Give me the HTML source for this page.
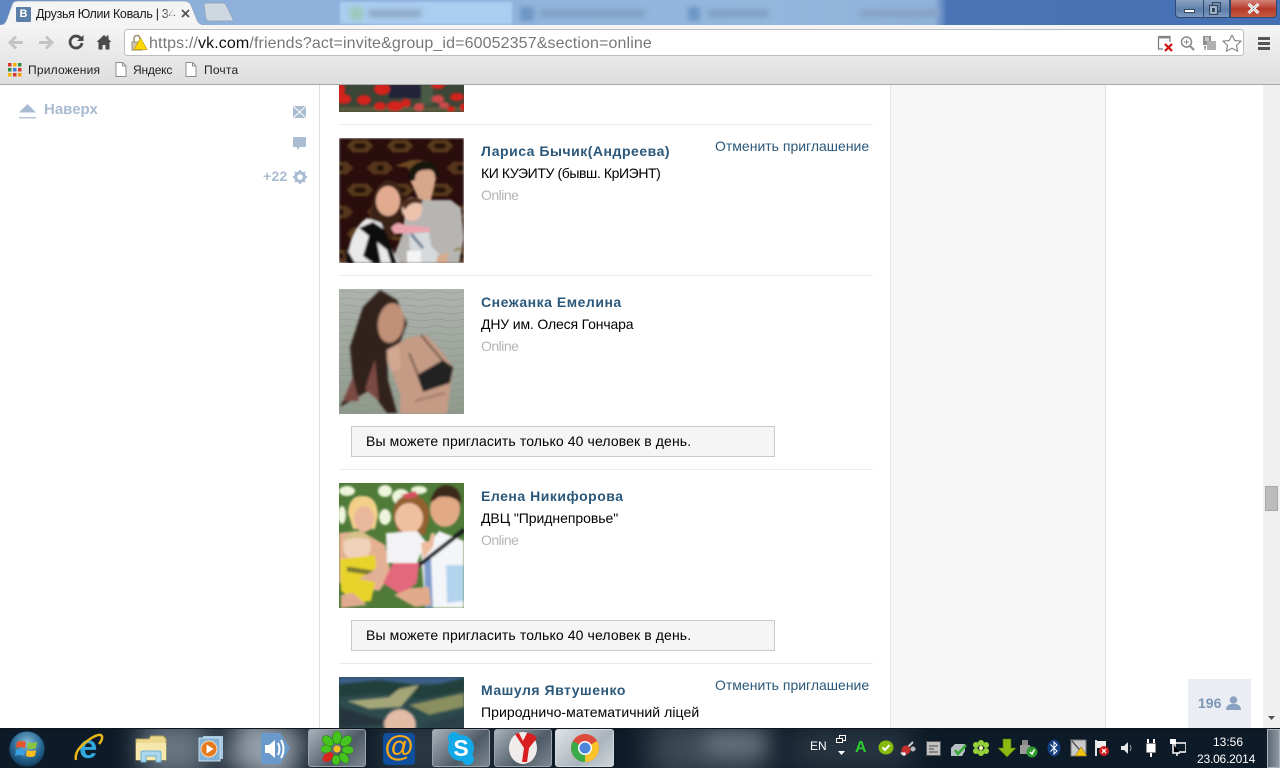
<!DOCTYPE html>
<html lang="ru"><head><meta charset="utf-8"><title>Друзья Юлии Коваль</title>
<style>
*{margin:0;padding:0;box-sizing:border-box}
html,body{width:1280px;height:768px;overflow:hidden;background:#fff;font-family:"Liberation Sans","DejaVu Sans",sans-serif}
.a{position:absolute}
.t{position:absolute;white-space:nowrap}
.name{font-weight:700;font-size:14px;color:#2b587a;left:481px;letter-spacing:.52px}
.sub{font-size:14px;color:#000;left:481px}
.on{font-size:14px;color:#b5b5b5;left:481px;letter-spacing:-.5px}
.sep{position:absolute;left:339px;width:534px;height:1px;background:#e9ebee}
.cancel{font-size:14px;color:#2b587a;left:715px}
.box{position:absolute;left:351px;width:424px;height:31px;border:1px solid #c9c9c9;background:#f5f5f5;font-size:14px;letter-spacing:.11px;color:#000;padding:6px 0 0 14px;white-space:nowrap}
svg{position:absolute;display:block}
.tbtn{position:absolute;top:729px;height:38px;border:1px solid #9aa3ac;border-radius:3px;background:linear-gradient(135deg,#a9b2bb,#4f5b66 60%,#7b8690)}
</style></head><body>

<!-- page columns -->
<div class="a" style="left:319px;top:85px;width:1px;height:643px;background:#dae1e8"></div>
<div class="a" style="left:890px;top:85px;width:216px;height:643px;background:#f7f7f7;border-left:1px solid #e7e8ec;border-right:1px solid #dae1e8"></div>
<div class="a" style="left:1263px;top:85px;width:17px;height:643px;background:#f0f0f0"></div>
<div class="a" style="left:1265px;top:486px;width:13px;height:25px;background:#bcbcbc;border:1px solid #a8a8a8"></div>
<svg style="left:1268px;top:716px" width="8" height="5"><path d="M0 0H7L3.500 4Z" fill="#505050"/></svg>

<!-- left rail -->
<svg style="left:19px;top:104px" width="18" height="16"><path d="M8.500 0L17 8.500H0Z" fill="#a9bbd0"/><rect y="13" width="17" height="1.500" fill="#b4c3d5"/></svg>
<div class="t" style="left:44px;top:101px;font-size:15px;font-weight:700;color:#a9bbd0">Наверх</div>
<svg style="left:293px;top:106px" width="13" height="12"><rect width="13" height="12" fill="#a9bcd2"/><path d="M0 0L13 12M13 0L0 12" stroke="#fff" stroke-width="1"/></svg>
<svg style="left:293px;top:137px" width="13" height="14"><path d="M1 0H12Q13 0 13 1V9Q13 10 12 10H7L4 13V10H1Q0 10 0 9V1Q0 0 1 0Z" fill="#a9bcd2"/></svg>
<div class="t" style="left:263px;top:168px;font-size:14px;font-weight:700;color:#a9bbd0;letter-spacing:.3px">+22</div>
<svg style="left:293px;top:170px" width="14" height="14"><circle cx="7" cy="7" r="4.300" fill="none" stroke="#a9bcd2" stroke-width="3"/><path d="M7 0V14M0 7H14M2 2L12 12M12 2L2 12" stroke="#a9bcd2" stroke-width="2" stroke-dasharray="2.300 9.400 2.300"/></svg>

<!-- photo 1 poppies -->
<svg style="left:339px;top:85px" width="125" height="27"><defs><filter id="b1"><feGaussianBlur stdDeviation="1.100"/></filter></defs><rect width="125" height="27" fill="#3c4636"/><g filter="url(#b1)"><rect x="50" width="32" height="13" fill="#24243a"/><rect x="82" width="12" height="20" fill="#4a5a45"/><rect y="22" width="125" height="5" fill="#5a5a3e"/><g fill="#d4241a"><ellipse cx="2" cy="5" rx="4" ry="7"/><ellipse cx="5" cy="14" rx="7" ry="5"/><ellipse cx="25" cy="15" rx="7" ry="5"/><ellipse cx="43" cy="4" rx="8" ry="6"/><ellipse cx="41" cy="21" rx="6" ry="4"/><ellipse cx="56" cy="21" rx="8" ry="5"/><ellipse cx="67" cy="18" rx="5" ry="4"/><ellipse cx="99" cy="-1" rx="7" ry="5"/><ellipse cx="118" cy="12" rx="7" ry="4"/><ellipse cx="112" cy="24" rx="4" ry="3"/><ellipse cx="124" cy="22" rx="3" ry="4"/></g><g fill="#cf4a4a"><ellipse cx="80" cy="22" rx="5" ry="4"/><ellipse cx="99" cy="14" rx="6" ry="4"/><ellipse cx="105" cy="20" rx="5" ry="3"/></g></g></svg>

<!-- row 2 -->
<div class="sep" style="top:124px"></div>
<svg style="left:339px;top:138px" width="125" height="125"><defs><filter id="b2"><feGaussianBlur stdDeviation="1.100"/></filter><pattern id="rug" width="40" height="44" patternUnits="userSpaceOnUse"><rect width="40" height="44" fill="#2a100d"/><path d="M8 8L14 2H28L34 8L28 14H14Z" fill="#5a3a1c"/><path d="M14 8L17 5H25L28 8L25 11H17Z" fill="#27160f"/><path d="M-12 30L-6 24H8L14 30L8 36H-6Z M28 30L34 24H48L54 30L48 36H34Z" fill="#55341a"/><path d="M-3 30L0 27H3L5 30L3 33H0ZM37 30L40 27H43L45 30L43 33H40Z" fill="#1f100c"/></pattern></defs><rect width="125" height="125" fill="url(#rug)" filter="url(#b2)"/><g filter="url(#b2)"><path d="M56 28L72 22H84L74 30Z" fill="#6e4c24"/><path d="M52 125L64 95L66 72L84 62L112 62L122 70L125 100L120 125Z" fill="#b7b5b2"/><path d="M70 40Q72 24 86 24Q98 26 97 40L92 62L80 62Z" fill="#d7a78b"/><path d="M70 44Q68 24 86 23Q100 24 99 40L96 40Q96 30 86 32Q76 32 76 42Z" fill="#191210"/><path d="M31 85Q32 46 48 42Q64 42 65 66L60 92L50 102L44 90Z" fill="#3a2114"/><ellipse cx="49" cy="63" rx="12" ry="15" fill="#e2ab90"/><path d="M8 125Q10 92 28 80L42 85L50 105L60 125Z" fill="#e9e9e9"/><path d="M20 90L30 98L24 118L34 125H42L38 104L48 112L52 125H58L46 92L34 84ZM6 108L16 125H8Z" fill="#111"/><ellipse cx="73" cy="71" rx="10" ry="12" fill="#eec3ad"/><path d="M62 66Q70 55 84 62L82 66Q72 62 66 72Z" fill="#4d2e1e"/><path d="M52 90Q58 82 66 87L78 88L92 90L90 94L56 96Z" fill="#eba4ad"/><path d="M70 96L90 94L92 108L102 118L100 125H72Z" fill="#d6dadc"/><path d="M72 96L84 110" stroke="#6f7f9a" stroke-width="3"/><rect x="68" y="113" width="14" height="12" fill="#f4f4f4"/><path d="M98 118L110 114L108 125H98Z" fill="#d6ac90"/><path d="M115 112L124 110" stroke="#8a7b35" stroke-width="2"/></g></svg>
<div class="t name" style="top:143px">Лариса Бычик(Андреева)</div>
<div class="t cancel" style="top:138px">Отменить приглашение</div>
<div class="t sub" style="top:165px;letter-spacing:-.4px">КИ КУЭИТУ (бывш. КрИЭНТ)</div>
<div class="t on" style="top:187px">Online</div>

<!-- row 3 -->
<div class="sep" style="top:275px"></div>
<svg style="left:339px;top:289px" width="125" height="125"><defs><filter id="b3"><feGaussianBlur stdDeviation="1.300"/></filter><linearGradient id="w3" x1="0" y1="0" x2="0" y2="1"><stop offset="0" stop-color="#aeb3ae"/><stop offset="1" stop-color="#8f9a8c"/></linearGradient><pattern id="wv" width="30" height="7" patternUnits="userSpaceOnUse"><path d="M0 3Q8 1 15 3T30 3" fill="none" stroke="#7f8781" stroke-width="1" opacity=".35"/></pattern></defs><rect width="125" height="125" fill="url(#w3)"/><rect width="125" height="125" fill="url(#wv)"/><g filter="url(#b3)"><path d="M41 1L58 11L68 34L61 54L48 61L49 91L58 124L48 124L31 101L8 114L1 118L14 91L11 58L24 18Z" fill="#33201d"/><path d="M4 112L14 88L20 112ZM26 100L36 70L40 112Z" fill="#7a4a42"/><ellipse cx="52" cy="34" rx="13" ry="20" fill="#c09178" transform="rotate(8 52 34)"/><path d="M48 61L71 48L88 46L104 64L114 78L111 101L108 125H61L61 104L48 71Z" fill="#c59b85"/><path d="M48 61L60 56L62 80L52 82Z" fill="#d1a892"/><path d="M78 86L104 71L114 78L111 94L84 103Z" fill="#222022"/><path d="M82 46L104 72M70 64L80 88" stroke="#3a2a25" stroke-width="1.500"/><path d="M76 112L106 104" stroke="#a98470" stroke-width="3"/></g></svg>
<div class="t name" style="top:294px">Снежанка Емелина</div>
<div class="t sub" style="top:316px;letter-spacing:-.15px">ДНУ им. Олеся Гончара</div>
<div class="t on" style="top:338px">Online</div>
<div class="box" style="top:426px">Вы можете пригласить только 40 человек в день.</div>

<!-- row 4 -->
<div class="sep" style="top:469px"></div>
<svg style="left:339px;top:483px" width="125" height="125"><defs><filter id="b4"><feGaussianBlur stdDeviation="1.100"/></filter></defs><rect width="125" height="125" fill="#4f7a38"/><g filter="url(#b4)"><g fill="#eef5dc"><ellipse cx="8" cy="8" rx="8" ry="5"/><ellipse cx="46" cy="8" rx="7" ry="6"/><ellipse cx="62" cy="14" rx="9" ry="8"/><ellipse cx="80" cy="7" rx="8" ry="4"/><ellipse cx="46" cy="34" rx="6" ry="8"/><ellipse cx="3" cy="32" rx="4" ry="9"/></g><path d="M0 50L22 48L46 62L52 92L40 108L0 100Z" fill="#e6b092"/><path d="M9 30Q10 12 24 13Q38 13 39 32L36 46L14 46Z" fill="#f2d08a"/><ellipse cx="25" cy="36" rx="10" ry="13" fill="#eab89c"/><path d="M86 125L82 70L100 48L125 58V125Z" fill="#f4f5f8"/><path d="M85 76H92L94 125H86Z" fill="#7d9ccc"/><path d="M107 82H125V118L108 120Z" fill="#b4d4ee"/><path d="M79 83L125 47" stroke="#171a22" stroke-width="4"/><ellipse cx="106" cy="26" rx="15" ry="18" fill="#e2a985"/><path d="M91 20Q95 2 108 2Q123 4 122 22Q116 12 100 14Z" fill="#3a2a1c"/><path d="M54 34Q54 12 72 12Q92 14 90 36L86 52H60Z" fill="#93602f"/><ellipse cx="70" cy="35" rx="14" ry="15" fill="#f0bfa0"/><path d="M62 12L76 8L80 13L68 16Z" fill="#d85060"/><path d="M47 50L78 48L88 60L82 70L78 80H48Z" fill="#f3f3f5"/><path d="M82 60L90 58L92 50L96 50L94 64L84 76Z" fill="#eebb9e"/><path d="M44 100L54 80L80 80L78 100L62 112Z" fill="#e4687c"/><path d="M55 112L72 105L90 104L92 122L76 124Z" fill="#e1aa8a"/><ellipse cx="18" cy="63" rx="14" ry="15" fill="#f0d2ba"/><path d="M4 58Q8 48 18 48Q28 48 32 58Q20 52 4 58Z" fill="#d8c08a"/><path d="M1 76L36 72L38 92L32 118L18 120L2 108Z" fill="#e8d32a"/><path d="M8 86L34 90" stroke="#7b7a30" stroke-width="5"/><path d="M2 112L14 110L28 122L2 125Z" fill="#e0aa90"/><path d="M20 96L40 100L50 84L44 78L34 88Z" fill="#e2b096"/></g></svg>
<div class="t name" style="top:488px">Елена Никифорова</div>
<div class="t sub" style="top:510px;letter-spacing:-.05px">ДВЦ "Приднепровье"</div>
<div class="t on" style="top:532px">Online</div>
<div class="box" style="top:620px">Вы можете пригласить только 40 человек в день.</div>

<!-- row 5 -->
<div class="sep" style="top:663px"></div>
<svg style="left:339px;top:677px" width="125" height="51"><defs><filter id="b5"><feGaussianBlur stdDeviation="1.200"/></filter></defs><rect width="125" height="51" fill="#2d4a4c"/><g filter="url(#b5)"><rect width="125" height="7" fill="#3a5f86"/><path d="M0 7L40 3L90 9L125 1V14L80 22L40 16L0 20Z" fill="#24403a"/><path d="M8 24L50 20L60 12L80 8L62 30L30 32Z" fill="#a5a678"/><path d="M70 28L125 16V30L90 38Z" fill="#8a8f5e"/><path d="M0 30L40 42L62 46L0 51Z" fill="#28353c"/><ellipse cx="61" cy="48" rx="16" ry="16" fill="#e3bca6"/><path d="M85 48L125 36V51H85Z" fill="#2c4148"/></g></svg>
<div class="t name" style="top:682px">Машуля Явтушенко</div>
<div class="t cancel" style="top:677px">Отменить приглашение</div>
<div class="t sub" style="top:704px;letter-spacing:.07px">Природничо-математичний ліцей</div>

<!-- counter -->
<div class="a" style="left:1188px;top:679px;width:63px;height:49px;background:#eaeef4"></div>
<div class="t" style="left:1198px;top:695px;font-size:14px;font-weight:700;color:#7a95b5">196</div>
<svg style="left:1226px;top:696px" width="15" height="14"><circle cx="7.500" cy="4" r="3.800" fill="#8ba3c0"/><path d="M0 14Q0 9 5 8H10Q15 9 15 14Z" fill="#8ba3c0"/></svg>

<!-- title bar -->
<div class="a" style="left:0;top:0;width:1280px;height:25px;background:linear-gradient(90deg,#5d86c1 0,#8db0db 15%,#94b7de 60%,#8fb2da 73%,#4a74b5 74%,#4470b3 100%)"></div>
<div class="a" style="left:340px;top:2px;width:172px;height:22px;background:#abcdf0;filter:blur(1px)"></div>
<div class="a" style="left:350px;top:7px;width:13px;height:13px;background:#9cc9bc;filter:blur(2.500px)"></div>
<div class="a" style="left:369px;top:10px;width:52px;height:7px;background:#8aa4bf;filter:blur(3px)"></div>
<div class="a" style="left:520px;top:7px;width:14px;height:14px;background:#6e97c6;filter:blur(2.500px)"></div>
<div class="a" style="left:540px;top:10px;width:105px;height:7px;background:#7f9dc0;filter:blur(3px)"></div>
<div class="a" style="left:688px;top:7px;width:12px;height:14px;background:#6e97c6;filter:blur(2.500px)"></div>
<div class="a" style="left:708px;top:10px;width:60px;height:7px;background:#7f9dc0;filter:blur(3px)"></div>
<div class="a" style="left:860px;top:10px;width:80px;height:7px;background:#86a0c2;filter:blur(3px)"></div>
<!-- tabs -->
<svg style="left:0;top:0" width="240" height="26"><path d="M0 25Q5 25 7 19L12 5Q13 1 18 1H184Q189 1 191 5L197 20Q199 25 205 25V26H0Z" fill="#f4f4f4" stroke="#8da2bd" stroke-width=".7"/><path d="M204 5Q204 3 207 3H222Q225 3 226 5L233 19Q234 21 231 21H210Q207 21 206 19Z" fill="#cfd7e0" stroke="#8ba0ba" stroke-width=".7"/></svg>
<div class="a" style="left:16px;top:7px;width:15px;height:15px;background:#5b7fa6;color:#fff;font-size:11px;font-weight:700;text-align:center;line-height:15px;border-radius:1px">В</div>
<div class="t" style="left:36px;top:6px;font-size:12.500px;letter-spacing:-.32px;color:#1a1a1a;line-height:16px">Друзья Юлии Коваль | 34</div>
<div class="a" style="left:162px;top:5px;width:12px;height:18px;background:linear-gradient(90deg,rgba(244,244,244,0),#f4f4f4)"></div>
<svg style="left:181px;top:9px" width="9" height="9"><path d="M1 1L8 8M8 1L1 8" stroke="#555" stroke-width="1.800"/></svg>
<!-- window controls -->
<div class="a" style="left:1175px;top:-1px;width:55px;height:19px;background:linear-gradient(#8fa6c6,#5f7ea8 60%,#7d9ac0);border:1px solid #2f4a70;border-top:0;border-radius:0 0 0 4px"></div>
<div class="a" style="left:1203px;top:0;width:1px;height:18px;background:#2f4a70"></div>
<div class="a" style="left:1230px;top:-1px;width:47px;height:19px;background:linear-gradient(#d48a7e,#b83a2c 55%,#c55a40);border:1px solid #2f4a70;border-top:0;border-radius:0 0 4px 0"></div>
<div class="a" style="left:1184px;top:9px;width:11px;height:4px;background:#fff;border:1px solid #33475f"></div>
<svg style="left:1209px;top:2px" width="12" height="13"><rect x="3.500" y=".5" width="8" height="9" fill="none" stroke="#33475f" stroke-width="1.200"/><rect x=".5" y="3.500" width="8" height="9" fill="#a5b7cd" stroke="#33475f" stroke-width="1.200"/><rect x="3" y="6" width="3" height="4" fill="#33475f"/></svg>
<svg style="left:1247px;top:3px" width="13" height="11"><path d="M1.500 1L11.500 10M11.500 1L1.500 10" stroke="#fff" stroke-width="3"/><path d="M1.500 1L11.500 10M11.500 1L1.500 10" stroke="#5a6a7a" stroke-width=".5"/></svg>

<!-- toolbar -->
<div class="a" style="left:0;top:25px;width:1280px;height:59px;background:linear-gradient(#f5f5f5,#e9e9e9 50%,#dedede)"></div>
<div class="a" style="left:0;top:84px;width:1280px;height:1px;background:#a8a8a8"></div>
<svg style="left:8px;top:34px" width="110" height="17"><path d="M2 8.500H15M8 2.500L2 8.500L8 14.500" fill="none" stroke="#c4c4c4" stroke-width="3"/><path d="M31 8.500H44M38 2.500L44 8.500L38 14.500" fill="none" stroke="#c4c4c4" stroke-width="3"/><path d="M72.500 4A6 6 0 1 0 74 9" fill="none" stroke="#4a4a4a" stroke-width="2.800"/><path d="M69 7H75.500V1Z" fill="#4a4a4a"/><path d="M96 1L88.500 8H90.500V15.500H94.500V11H97.500V15.500H101.500V8H103.500L100.500 5.200V1.500H98.500V3.300Z" fill="#4a4a4a"/></svg>
<div class="a" style="left:124px;top:29px;width:1120px;height:27px;background:#fff;border:1px solid #bdbdbd;border-radius:3px"></div>
<svg style="left:130px;top:34px" width="18" height="18"><path d="M4 9V5Q4 1.500 7 1.500Q10 1.500 10 5V9" fill="none" stroke="#9a8f70" stroke-width="1.500"/><rect x="2" y="8" width="10" height="8" fill="#cfc8b0" stroke="#9a9278"/><path d="M10.500 4L17 15.500H4Z" fill="#ffd800" stroke="#c09a00" stroke-width=".7"/></svg>
<div class="t" style="left:149px;top:35px;font-size:16px;letter-spacing:.12px;line-height:18px;color:#777">https://<span style="color:#111">vk.com</span>/friends?act=invite&amp;group_id=60052357&amp;section=online</div>
<svg style="left:1157px;top:35px" width="90" height="18"><path d="M1.500 1.500H13V7M1.500 1.500V14H6" fill="none" stroke="#777" stroke-width="1.200"/><rect x="1.500" y="1.500" width="11.500" height="2" fill="#888"/><path d="M8 9L15 16M15 9L8 16" stroke="#d01010" stroke-width="2.200"/><circle cx="29.500" cy="7" r="5" fill="#fff" stroke="#8a8a8a" stroke-width="1.500"/><path d="M33 11L37 15" stroke="#8a8a8a" stroke-width="2"/><path d="M29.500 4.500V9.500M27 7H32" stroke="#8a8a8a"/><rect x="46" y="1" width="8" height="9" fill="#8f8f8f"/><rect x="50" y="6" width="9" height="9" fill="#b0b0b0"/><path d="M48 3H52M48 5H52" stroke="#fff"/><path d="M47 12H49M48 11V15" stroke="#777"/><path d="M75 1L77.800 6.800L84 7.600L79.500 12L80.600 18L75 15L69.400 18L70.500 12L66 7.600L72.200 6.800Z" fill="#fff" stroke="#888" stroke-width="1.200" transform="translate(0,-1) scale(1,.95)"/></svg>
<div class="a" style="left:1258px;top:37px;width:12px;height:3px;background:#555"></div>
<div class="a" style="left:1258px;top:42px;width:12px;height:3px;background:#555"></div>
<div class="a" style="left:1258px;top:47px;width:12px;height:3px;background:#555"></div>

<!-- bookmarks -->
<svg style="left:8px;top:63px" width="14" height="14"><g><rect x="0" y="0" width="3.500" height="3.500" fill="#d9382c"/><rect x="5" y="0" width="3.500" height="3.500" fill="#f0b400"/><rect x="10" y="0" width="3.500" height="3.500" fill="#2f8f4a"/><rect x="0" y="5" width="3.500" height="3.500" fill="#2f8f4a"/><rect x="5" y="5" width="3.500" height="3.500" fill="#3a7fdc"/><rect x="10" y="5" width="3.500" height="3.500" fill="#d9382c"/><rect x="0" y="10" width="3.500" height="3.500" fill="#f0b400"/><rect x="5" y="10" width="3.500" height="3.500" fill="#d9382c"/><rect x="10" y="10" width="3.500" height="3.500" fill="#f0a000"/></g></svg>
<div class="t" style="left:28px;top:62px;font-size:12px;letter-spacing:.2px;line-height:16px;color:#222">Приложения</div>
<svg style="left:115px;top:62px" width="12" height="15"><path d="M1 .5H7.500L11 4V14.500H1Z" fill="#fff" stroke="#8f8f8f"/><path d="M7.500 .5V4H11" fill="none" stroke="#8f8f8f"/></svg>
<div class="t" style="left:133px;top:62px;font-size:12px;letter-spacing:-.2px;line-height:16px;color:#222">Яндекс</div>
<svg style="left:185px;top:62px" width="12" height="15"><path d="M1 .5H7.500L11 4V14.500H1Z" fill="#fff" stroke="#8f8f8f"/><path d="M7.500 .5V4H11" fill="none" stroke="#8f8f8f"/></svg>
<div class="t" style="left:204px;top:62px;font-size:12px;letter-spacing:.2px;line-height:16px;color:#222">Почта</div>

<!-- taskbar -->
<div class="a" style="left:0;top:728px;width:1280px;height:40px;overflow:hidden;background:#0d1a27;border-top:1px solid #10151b">
  <div class="a" style="left:140px;top:-10px;width:70px;height:60px;background:#6a7783;filter:blur(14px)"></div>
  <div class="a" style="left:230px;top:-10px;width:70px;height:60px;background:#97a1ab;filter:blur(14px);transform:rotate(20deg)"></div>
  <div class="a" style="left:380px;top:-10px;width:110px;height:60px;background:#2b3843;filter:blur(14px)"></div>
  <div class="a" style="left:650px;top:-10px;width:120px;height:60px;background:#3f4d58;filter:blur(16px)"></div>
  <div class="a" style="left:705px;top:5px;width:60px;height:20px;background:#6d7985;filter:blur(10px)"></div>
  <div class="a" style="left:790px;top:0;width:120px;height:40px;background:#2a3844;filter:blur(14px)"></div>
</div>
<svg style="left:8px;top:730px" width="38" height="38"><defs><radialGradient id="st" cx=".5" cy=".35" r=".7"><stop offset="0" stop-color="#8ac0dc"/><stop offset=".6" stop-color="#25648f"/><stop offset="1" stop-color="#0e3350"/></radialGradient></defs><circle cx="19" cy="19" r="18" fill="url(#st)" stroke="#0e2233"/><path d="M9 12Q13 10 18 12L17 18Q13 16 8 18Z" fill="#e8542a"/><path d="M20 12Q24 14 29 12L28 18Q24 20 19 18Z" fill="#8cc63f"/><path d="M8 20Q13 18 17 20L16 26Q12 24 7 26Z" fill="#3a9ee0"/><path d="M19 20Q23 22 28 20L27 26Q23 28 18 26Z" fill="#fbbc1c"/></svg>
<svg style="left:74px;top:731px" width="32" height="34"><text x="5" y="27" font-family="Liberation Sans,sans-serif" font-size="33" font-weight="700" fill="#2fa8e0">e</text><path d="M2 29Q0 20 12 11Q22 3 27 4Q30 7 25 13" fill="none" stroke="#e9b817" stroke-width="2.500"/></svg>
<svg style="left:135px;top:733px" width="32" height="30"><path d="M1 6H14L16 3H28L31 6V27H1Z" fill="#ecd98e" stroke="#b8a35f"/><rect x="1" y="10" width="30" height="17" fill="#f6e7ad"/><path d="M6 29V20Q6 18 8 18H24Q26 18 26 20V29H21V23H11V29Z" fill="#a9d8ee" stroke="#6fb2d2"/></svg>
<svg style="left:198px;top:735px" width="27" height="27"><rect x="5" y="1" width="20" height="23" fill="#a6c9e2"/><rect x="1" y="3" width="21" height="23" fill="#7fb2d6" stroke="#c8dbea"/><circle cx="11" cy="14" r="8" fill="#e67a1f" stroke="#f8dcc0"/><path d="M8.500 9.500L15.500 14L8.500 18.500Z" fill="#fff"/></svg>
<svg style="left:259px;top:732px" width="32" height="33"><path d="M2 1H21L31 16L21 32H2Z" fill="#6a9acb"/><path d="M6 13H10L16 8V26L10 21H6Z" fill="#fff"/><path d="M19 11Q22 17 19 23M22 8Q27 17 22 26" fill="none" stroke="#fff" stroke-width="2"/></svg>
<div class="tbtn" style="left:308px;width:58px"></div>
<svg style="left:321px;top:731px" width="32" height="34"><g fill="#46c31e" stroke="#1c7a0e" stroke-width=".5"><ellipse cx="16" cy="6.500" rx="4.500" ry="6.500"/><ellipse cx="25" cy="10" rx="6.500" ry="4.500" transform="rotate(-40 25 10)"/><ellipse cx="27" cy="19" rx="6" ry="4" /><ellipse cx="23" cy="27" rx="6" ry="4" transform="rotate(50 23 27)"/><ellipse cx="15" cy="29" rx="4" ry="5"/><ellipse cx="7" cy="10" rx="6.500" ry="4.500" transform="rotate(40 7 10)"/><ellipse cx="5" cy="18" rx="5.500" ry="4"/></g><ellipse cx="7" cy="26" rx="6" ry="4" transform="rotate(-40 7 26)" fill="#d8261c"/><circle cx="16" cy="18" r="3.500" fill="#f4c020"/></svg>
<div class="a" style="left:383px;top:733px;width:32px;height:32px;background:#0f4e9c;border-radius:4px"></div>
<div class="t" style="left:383px;top:729px;width:32px;text-align:center;font-size:30px;font-weight:700;color:#f7a81b;line-height:36px">@</div>
<div class="tbtn" style="left:432px;width:58px"></div>
<svg style="left:446px;top:731px" width="30" height="34"><circle cx="15" cy="17" r="13" fill="#13a9e9"/><rect x="2" y="1" width="12" height="12" rx="6" fill="#13a9e9"/><rect x="16" y="22" width="12" height="12" rx="6" fill="#13a9e9"/><text x="15" y="25" text-anchor="middle" font-family="Liberation Sans,sans-serif" font-size="23" font-weight="700" fill="#fff">S</text></svg>
<div class="tbtn" style="left:494px;width:58px"></div>
<svg style="left:507px;top:731px" width="32" height="34"><ellipse cx="16" cy="17" rx="14" ry="16" fill="#f0ecec"/><path d="M8 3L17 17L15 31H20L22 17L30 7Q26 2 20 2L16 10L12 2Z" fill="#d81e1e"/></svg>
<div class="tbtn" style="left:555px;width:59px;background:linear-gradient(135deg,#dfe3e7,#aab4bc 60%,#cfd5da);border-color:#d5d9de"></div>
<svg style="left:569px;top:733px" width="32" height="32"><circle cx="16" cy="15" r="14" fill="#dd4b3d"/><path d="M16 15L4 8A14 14 0 0 0 16 29Z" fill="#3bab4a"/><path d="M16 15L28 8A14 14 0 0 1 16 29Z" fill="#fbc42d"/><circle cx="16" cy="15" r="7" fill="#fff"/><circle cx="16" cy="15" r="5.500" fill="#4c87da"/></svg>

<!-- tray -->
<div class="t" style="left:810px;top:739px;font-size:12px;line-height:14px;color:#fff">EN</div>
<svg style="left:836px;top:735px" width="11" height="22"><rect x="3.500" y=".5" width="6" height="5" fill="none" stroke="#fff"/><rect x=".5" y="3.500" width="6" height="4" fill="#222" stroke="#fff"/><path d="M2 16H9L5.500 20Z" fill="#fff"/></svg>
<div class="t" style="left:855px;top:739px;font-size:16px;font-weight:700;line-height:17px;color:#2ccb2c">A</div>
<svg style="left:878px;top:740px" width="16" height="15"><ellipse cx="8" cy="7.500" rx="7.500" ry="7" fill="#84ba0c"/><path d="M4.500 7.500L7 10L11.500 5" fill="none" stroke="#fff" stroke-width="2"/></svg>
<svg style="left:899px;top:740px" width="18" height="16"><path d="M2 14L14 2" stroke="#c9c9c9" stroke-width="2"/><circle cx="7" cy="10" r="4.500" fill="#c42f2f"/><circle cx="14" cy="9" r="2.500" fill="#bbb"/><circle cx="5" cy="14" r="1.800" fill="#eee"/></svg>
<svg style="left:926px;top:741px" width="15" height="15"><rect x=".5" y=".5" width="14" height="14" fill="#c2c2c2" stroke="#555"/><path d="M3 5H12M3 8H8M3 11H12" stroke="#444"/></svg>
<svg style="left:950px;top:742px" width="17" height="15"><path d="M1 6L5 2H15V9L12 14H1Z" fill="#b8bfc4"/><path d="M5 8L8 12L16 3" fill="none" stroke="#37a937" stroke-width="2.500"/></svg>
<svg style="left:972px;top:739px" width="18" height="18"><g fill="#93d23a"><circle cx="9" cy="4" r="3"/><circle cx="14" cy="6" r="3"/><circle cx="14" cy="12" r="3"/><circle cx="9" cy="14" r="3"/><circle cx="4" cy="12" r="3"/><circle cx="4" cy="6" r="3"/></g><circle cx="9" cy="9" r="2" fill="#f6f6b8"/></svg>
<svg style="left:997px;top:738px" width="20" height="20"><path d="M6 1H14V10H19L10 19L1 10H6Z" fill="#8bbb10" stroke="#4c7008" stroke-width=".6"/></svg>
<svg style="left:1020px;top:740px" width="18" height="18"><rect x="2" y="0" width="6" height="5" fill="#888"/><rect x="0" y="5" width="10" height="9" fill="#9a9a9a"/><circle cx="12" cy="12" r="5.500" fill="#2f9a2f"/><path d="M10 12L12 14L14.500 9.500" fill="none" stroke="#fff" stroke-width="1.500"/></svg>
<svg style="left:1047px;top:739px" width="14" height="18"><ellipse cx="7" cy="9" rx="6.500" ry="8.500" fill="#123d7f"/><path d="M3.500 5.500L10 12L7 15V3L10 6L3.500 12.500" fill="none" stroke="#fff"/></svg>
<svg style="left:1070px;top:739px" width="18" height="18"><path d="M1 1H16V17H1Z" fill="#c9c9c9" stroke="#777"/><path d="M2 2L14 16" stroke="#333"/><path d="M11 8L17 17H5Z" fill="#f1c40f" stroke="#7a5c00" stroke-width=".5"/></svg>
<svg style="left:1094px;top:739px" width="16" height="18"><path d="M2 1V17" stroke="#e5e5e5" stroke-width="2"/><path d="M3 2H12V9H3Z" fill="#efefef"/><circle cx="10" cy="12" r="5" fill="#d31f1f"/><path d="M8 10L12 14M12 10L8 14" stroke="#fff" stroke-width="1.300"/></svg>
<svg style="left:1120px;top:741px" width="14" height="14"><path d="M1 5H4L8 1V13L4 9H1Z" fill="#e8e8e8"/><path d="M10 4Q12 7 10 10" fill="none" stroke="#9a9a9a"/></svg>
<svg style="left:1143px;top:739px" width="16" height="18"><rect x="3" y="4" width="10" height="10" fill="#fff" stroke="#222"/><path d="M5 0V4M11 0V4M8 14V18" stroke="#fff" stroke-width="2"/></svg>
<svg style="left:1170px;top:739px" width="16" height="18"><rect x="5" y="4" width="11" height="9" fill="none" stroke="#fff" stroke-width="1.500"/><rect x="0" y="0" width="6" height="5" fill="#fff"/><path d="M3 5V14H10M7 14V17" stroke="#fff" stroke-width="1.500"/></svg>
<div class="t" style="left:1213px;top:735px;font-size:12px;line-height:14px;color:#fff">13:56</div>
<div class="t" style="left:1197px;top:752px;font-size:12px;line-height:14px;color:#fff;letter-spacing:-.2px">23.06.2014</div>
<div class="a" style="left:1267px;top:729px;width:13px;height:39px;background:linear-gradient(90deg,#5d6a75,#8d98a2);border:1px solid #aab2ba"></div>
</body></html>
